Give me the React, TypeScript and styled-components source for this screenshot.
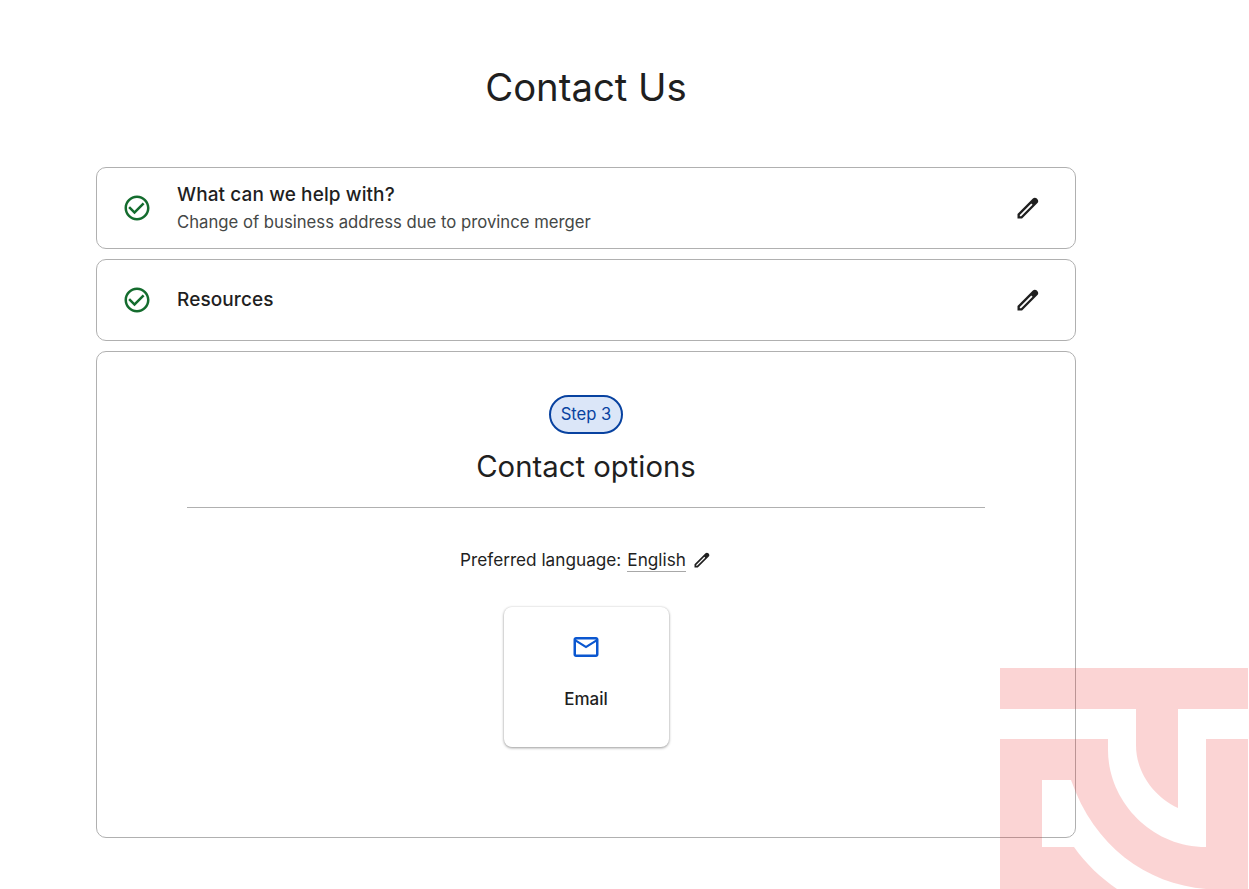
import React from 'react';
import styled, { createGlobalStyle } from 'styled-components';

const GlobalStyle = createGlobalStyle`
  html, body {
    margin: 0;
    padding: 0;
    background: #fff;
  }
  body {
    font-family: Inter, Roboto, sans-serif;
    color: #1f1f1f;
    overflow: hidden;
  }
`;

const PENCIL_PATH =
  'M3 21v-3.9L16.2 3.9c.9-.9 2.4-.9 3.4 0l.5.5c.9 1 .9 2.4 0 3.4L6.9 21zM5 19h1.1L15.9 9.2 14.8 8.1 5 17.9z';
const CHECK_PATH =
  'M16.59 7.58L10 14.17l-3.59-3.58L5 12l5 5 8-8zM12 2C6.48 2 2 6.48 2 12s4.48 10 10 10 10-4.48 10-10S17.52 2 12 2zm0 18c-4.42 0-8-3.58-8-8s3.58-8 8-8 8 3.58 8 8-3.58 8-8 8z';
const MAIL_PATH =
  'M20 4H4c-1.1 0-1.99.9-1.99 2L2 18c0 1.1.9 2 2 2h16c1.1 0 2-.9 2-2V6c0-1.1-.9-2-2-2zm0 14H4V8l8 5 8-5v10zm-8-7L4 6h16l-8 5z';

type IconProps = { d: string; size: number; color: string };
const Icon = ({ d, size, color }: IconProps) => (
  <svg width={size} height={size} viewBox="0 0 24 24" fill={color} fillRule="evenodd" style={{ flex: 'none', display: 'block' }}>
    <path d={d} />
  </svg>
);

const Watermark = () => (
  <WatermarkSvg width="249" height="221" viewBox="1000 668 249 221">
    <path d="M1000 668H1248V709H1178V808C1153 796 1136 772 1136 745V709H1000Z" />
    <path d="M1000 739H1108V750C1108 800 1150 847 1206 847V739H1248V889H1206C1146 884 1094 846 1071 780H1042V847H1074C1086 864 1100 877 1117 889H1000Z" />
  </WatermarkSvg>
);

type StepRowProps = { title: string; subtitle?: string };
const StepRow = ({ title, subtitle }: StepRowProps) => (
  <RowCard>
    <Icon d={CHECK_PATH} size={30} color="#146c2e" />
    <RowText>
      <RowTitle>{title}</RowTitle>
      {subtitle && <RowSubtitle>{subtitle}</RowSubtitle>}
    </RowText>
    <Icon d={PENCIL_PATH} size={28} color="#1f1f1f" />
  </RowCard>
);

export default function App() {
  return (
    <>
      <GlobalStyle />
      <Page>
        <Heading>Contact Us</Heading>
        <Stack>
          <StepRow title="What can we help with?" subtitle="Change of business address due to province merger" />
          <StepRow title="Resources" />
          <OptionsCard>
            <StepPill>Step 3</StepPill>
            <OptionsTitle>Contact options</OptionsTitle>
            <Divider />
            <LanguageRow>
              Preferred language:
              <LanguageLink>English</LanguageLink>
              <Icon d={PENCIL_PATH} size={20} color="#1f1f1f" />
            </LanguageRow>
            <ChannelCard>
              <Icon d={MAIL_PATH} size={30} color="#0b57d0" />
              <ChannelLabel>Email</ChannelLabel>
            </ChannelCard>
          </OptionsCard>
        </Stack>
      </Page>
      <Watermark />
    </>
  );
}

const Page = styled.main`
  width: 980px;
  height: 889px;
  margin-left: 96px;
  box-sizing: border-box;
  padding-top: 63px;
`;

const Heading = styled.h1`
  margin: 0 0 56px;
  font-size: 38.3px;
  line-height: 48px;
  font-weight: 400;
  text-align: center;
  color: #1f1f1f;
`;

const Stack = styled.div`
  display: flex;
  flex-direction: column;
  gap: 10px;
`;

const RowCard = styled.section`
  height: 82px;
  box-sizing: border-box;
  border: 1px solid #b0b0b0;
  border-radius: 10px;
  padding: 0 33px 0 25px;
  display: flex;
  align-items: center;
  gap: 25px;
`;

const RowText = styled.div`
  flex: 1;
  display: flex;
  flex-direction: column;
  gap: 2px;
`;

const RowTitle = styled.div`
  font-size: 19px;
  letter-spacing: 0.1px;
  line-height: 26px;
  font-weight: 500;
  color: #1f1f1f;
`;

const RowSubtitle = styled.div`
  font-size: 16.7px;
  line-height: 24px;
  color: #444746;
`;

const OptionsCard = styled.section`
  height: 487px;
  box-sizing: border-box;
  border: 1px solid #b0b0b0;
  border-radius: 10px;
  padding: 43px 90px 0;
  display: flex;
  flex-direction: column;
  align-items: center;
`;

const StepPill = styled.div`
  width: 74px;
  height: 39px;
  box-sizing: border-box;
  padding-bottom: 2px;
  border: 2px solid #0842a0;
  border-radius: 20px;
  background: #dbe6f8;
  color: #0842a0;
  font-size: 16.6px;
  display: flex;
  align-items: center;
  justify-content: center;
`;

const OptionsTitle = styled.h2`
  margin: 15px 0 22px;
  font-size: 29.3px;
  line-height: 36px;
  font-weight: 400;
  color: #1f1f1f;
`;

const Divider = styled.hr`
  width: 100%;
  margin: 0;
  border: 0;
  border-top: 1px solid #b0b0b0;
`;

const LanguageRow = styled.div`
  margin-top: 40px;
  display: flex;
  align-items: center;
  font-size: 17.2px;
  line-height: 24px;
  color: #1f1f1f;
`;

const LanguageLink = styled.span`
  margin: 0 6px;
  border-bottom: 1px solid #a8a8a8;
  line-height: 22px;
`;

const ChannelCard = styled.div`
  margin-top: 35px;
  width: 165px;
  height: 140px;
  box-sizing: border-box;
  padding-top: 25px;
  border-radius: 8px;
  background: #fff;
  box-shadow: 0 1px 3px rgba(0, 0, 0, 0.38), 0 0 2px rgba(0, 0, 0, 0.1);
  display: flex;
  flex-direction: column;
  align-items: center;
`;

const ChannelLabel = styled.div`
  margin-top: 25px;
  font-size: 17px;
  line-height: 24px;
  font-weight: 500;
`;

const WatermarkSvg = styled.svg`
  position: absolute;
  left: 1000px;
  top: 668px;
  fill: rgba(235, 40, 40, 0.2);
  pointer-events: none;
`;
